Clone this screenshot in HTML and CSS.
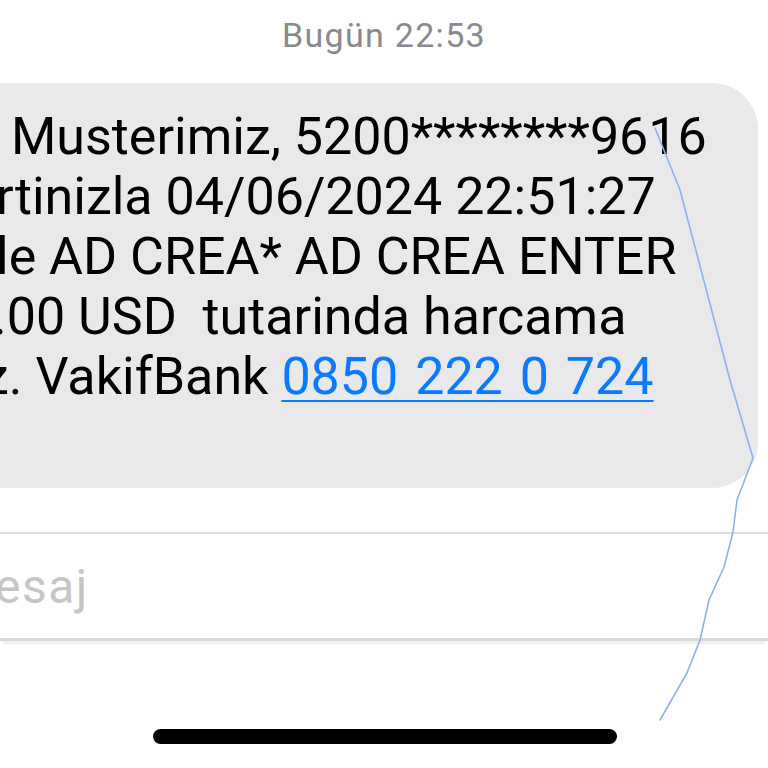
FILE: index.html
```html
<!DOCTYPE html>
<html lang="tr">
  <head>
    <meta charset="UTF-8" />
    <meta name="viewport" content="width=device-width, initial-scale=1.0" />
    <title>Mesajlar</title>
    <link rel="stylesheet" href="styles.css">
  </head>
  <body>
    <div class="screen">
      <div class="stamp">Bugün 22:53</div>

      <div class="bubble">
        <div class="line l1"> Musterimiz, 5200********9616</div>
        <div class="line">rtinizla 04/06/2024 22:51:27</div>
        <div class="line">le AD CREA* AD CREA ENTER</div>
        <div class="line l4">.00 USD  tutarinda harcama</div>
        <div class="line l5">z. VakifBank <a class="phone" href="#">0850 222 0 724</a></div>
        <div class="line"> </div>
      </div>

      <div class="composer">
        <span class="placeholder">esaj</span>
      </div>

      <div class="home-bar"></div>

      <svg class="scribble" width="768" height="768" viewBox="0 0 768 768">
        <polyline points="655,128 680,190 705,285 730,380 753,458 737,500 733,532 724,567 709,600 700,640 687,673 660,720"
          fill="none" stroke="#8db3ef" stroke-width="1.6" stroke-linejoin="round" stroke-linecap="round" />
      </svg>
    </div>
  </body>
</html>
```

FILE: styles.css
```css
body {
  margin: 0;
  background-color: white;
  font-family: Roboto, "Liberation Sans", sans-serif;
  overflow: hidden;
}
.screen {
  position: relative;
  width: 768px;
  height: 768px;
  overflow: hidden;
}
.stamp {
  padding-top: 15px;
  font-size: 34px;
  line-height: 40px;
  letter-spacing: 1.3px;
  color: #8a8a8e;
  text-align: center;
}
.bubble {
  margin: 28px 10px 0 -60px;
  padding: 24px 0 21px 56px;
  background-color: #e9e9eb;
  border-radius: 46px;
  font-size: 52px;
  line-height: 60px;
  color: #000;
}
.line {
  white-space: pre;
}
.l1 {
  text-indent: 2px;
}
.l4 {
  text-indent: -3px;
}
.l5 {
  text-indent: -13px;
}
.phone {
  color: #0a7aff;
  word-spacing: 4px;
  text-decoration: underline;
  text-decoration-thickness: 2px;
  text-underline-offset: 6px;
}
.composer {
  margin-top: 44px;
  height: 104px;
  border-top: 2px solid #dcdcdc;
  border-bottom: 3px solid #d9d9d9;
  box-shadow: 0 6px 0 -3px #f0f0f0;
}
.placeholder {
  display: block;
  margin-left: -5px;
  padding-top: 1px;
  font-size: 48px;
  line-height: 104px;
  letter-spacing: 1.5px;
  color: #c5c5c7;
}
.home-bar {
  width: 464px;
  height: 15px;
  margin: 88px 0 0 153px;
  background-color: #000;
  border-radius: 8px;
}
.scribble {
  position: absolute;
  top: 0;
  left: 0;
  pointer-events: none;
}
```
